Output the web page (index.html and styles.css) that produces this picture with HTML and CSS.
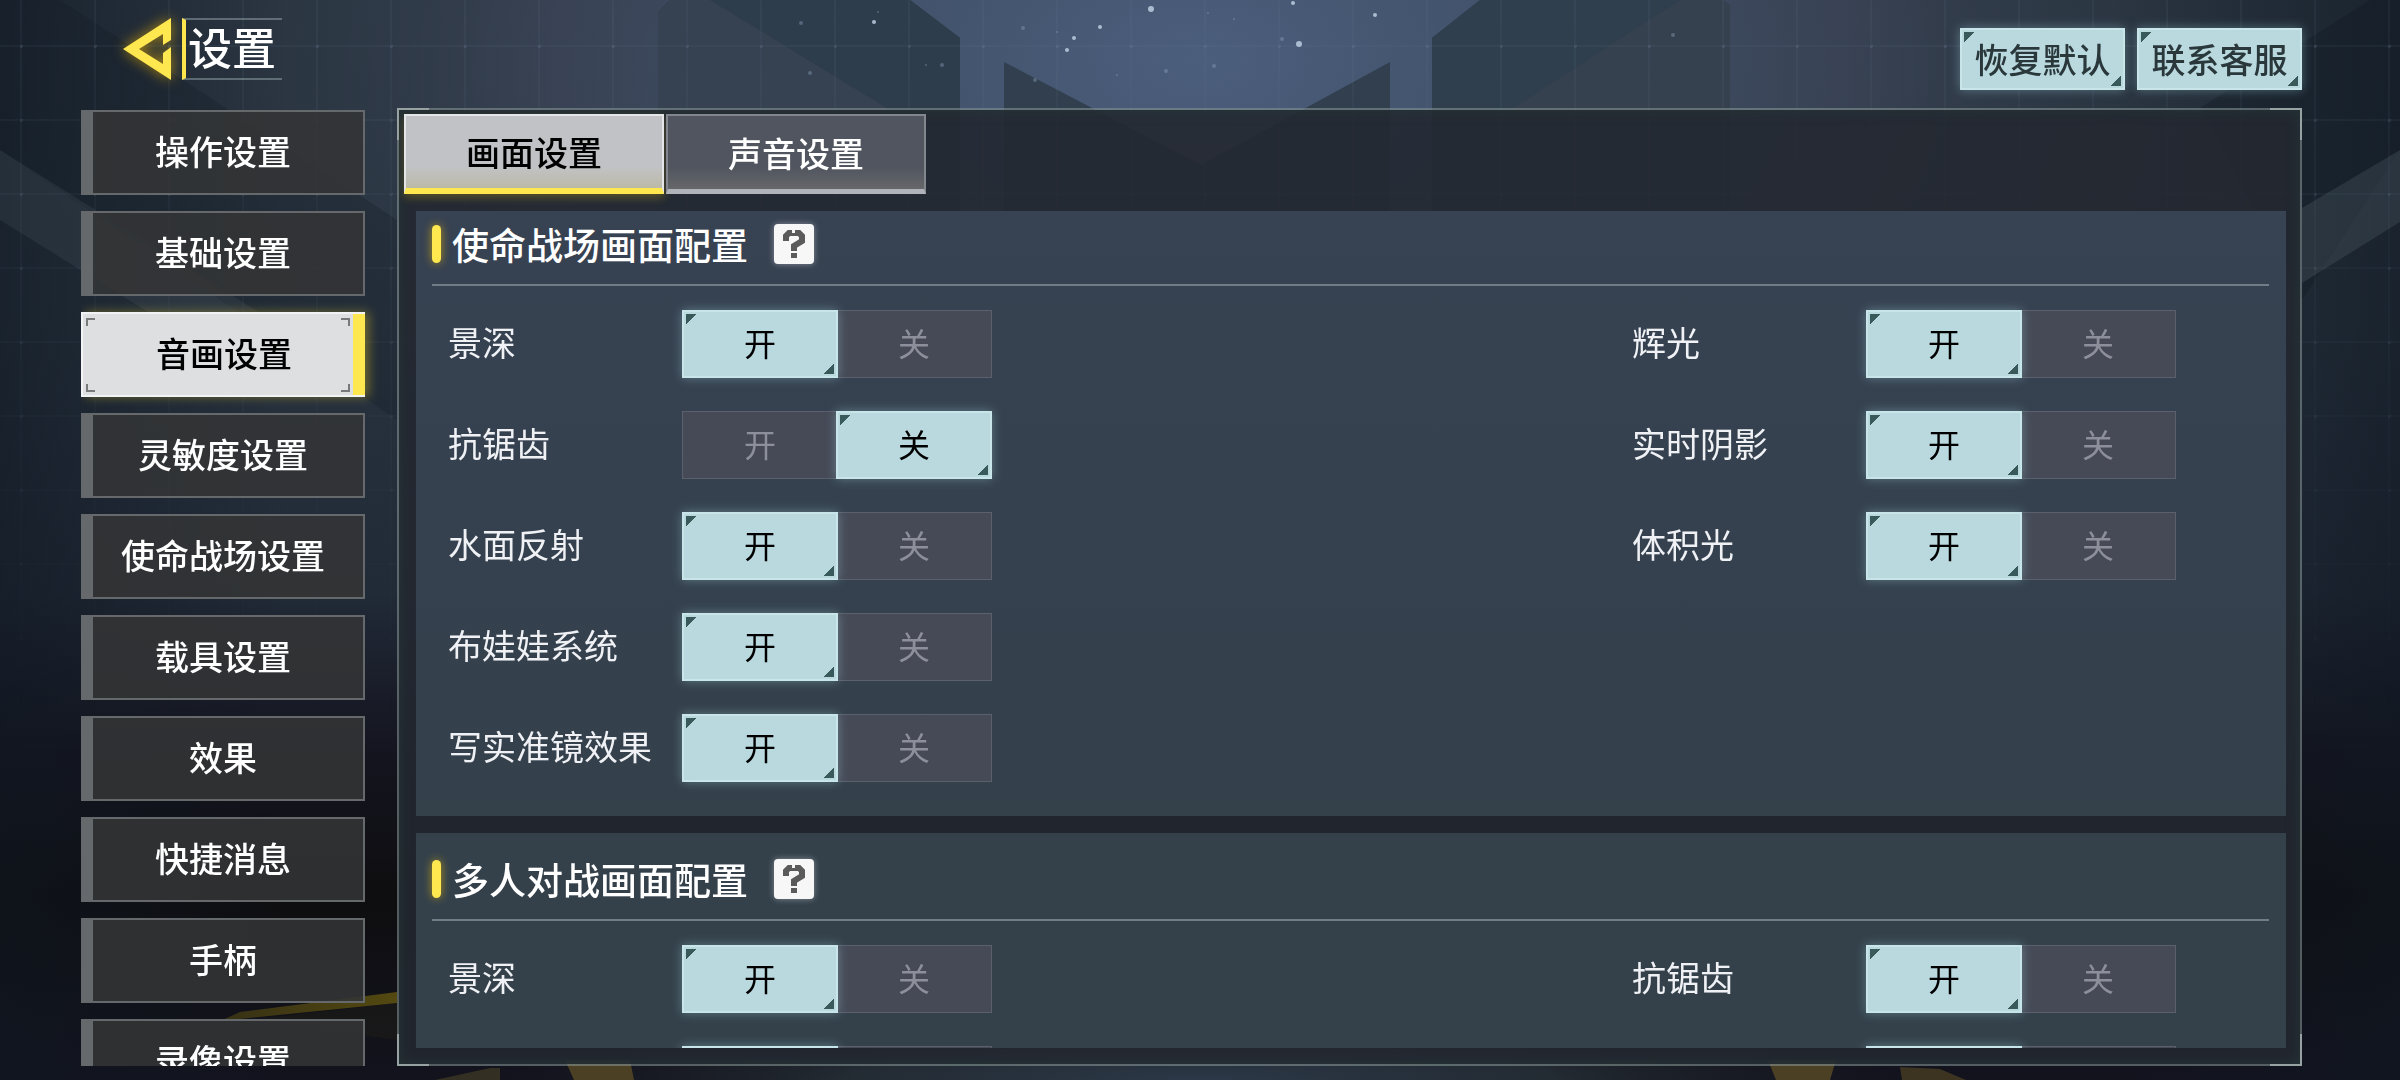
FILE: index.html
```html
<!DOCTYPE html>
<html lang="zh-CN">
<head>
<meta charset="utf-8">
<meta name="viewport" content="width=device-width, initial-scale=1">
<title>设置</title>
<link rel="stylesheet" href="styles.css">
</head>
<body>
<svg class="backdrop" viewBox="0 0 2400 1080" preserveAspectRatio="xMidYMid slice" aria-hidden="true">
  <defs>
    <linearGradient id="sky" x1="0" y1="0" x2="0" y2="1">
      <stop offset="0" stop-color="#2a3541"/>
      <stop offset="0.3" stop-color="#28333f"/>
      <stop offset="0.55" stop-color="#212a37"/>
      <stop offset="0.7" stop-color="#14141f"/>
      <stop offset="0.83" stop-color="#0e0e10"/>
      <stop offset="1" stop-color="#13131e"/>
    </linearGradient>
    <radialGradient id="moon" gradientUnits="userSpaceOnUse" cx="1200" cy="60" r="1000" gradientTransform="translate(0 24) scale(1 0.6)">
      <stop offset="0" stop-color="#4b5e7c"/>
      <stop offset="0.35" stop-color="#44546e" stop-opacity="0.9"/>
      <stop offset="0.65" stop-color="#3e485c" stop-opacity="0.7"/>
      <stop offset="1" stop-color="#303a48" stop-opacity="0"/>
    </radialGradient>
    <linearGradient id="edge" x1="0" y1="0" x2="1" y2="0">
      <stop offset="0" stop-color="#0f1721" stop-opacity="0.6"/>
      <stop offset="0.12" stop-color="#0f1721" stop-opacity="0"/>
      <stop offset="0.88" stop-color="#0f1721" stop-opacity="0"/>
      <stop offset="1" stop-color="#0f1721" stop-opacity="0.6"/>
    </linearGradient>
    <radialGradient id="floor" gradientUnits="userSpaceOnUse" cx="1200" cy="1080" r="700" gradientTransform="translate(0 972) scale(1 0.1)">
      <stop offset="0" stop-color="#2c3848"/>
      <stop offset="0.5" stop-color="#232b33"/>
      <stop offset="1" stop-color="#1a1e22" stop-opacity="0"/>
    </radialGradient>
    <linearGradient id="fade" x1="0" y1="0" x2="0" y2="1">
      <stop offset="0" stop-color="#fff"/>
      <stop offset="1" stop-color="#fff" stop-opacity="0"/>
    </linearGradient>
    <linearGradient id="stripe" x1="0" y1="0" x2="1" y2="0">
      <stop offset="0" stop-color="#5b4f10" stop-opacity="0.5"/>
      <stop offset="1" stop-color="#5b4f10" stop-opacity="0.9"/>
    </linearGradient>
    <mask id="upper"><rect width="2400" height="720" fill="url(#fade)"/></mask>
    <pattern id="grid" width="74" height="74" x="20" y="45" patternUnits="userSpaceOnUse">
      <path d="M0 1H74M1 0V74" stroke="#6a8198" stroke-opacity="0.1" stroke-width="2"/>
      <circle cx="1" cy="1" r="2" fill="#8298b4" fill-opacity="0.2"/>
    </pattern>
  </defs>
  <rect width="2400" height="1080" fill="url(#sky)"/>
  <rect width="2400" height="660" fill="url(#moon)"/>
  <path d="M0 0H60L290 150L397 220V420L0 150Z" fill="#1a232d" fill-opacity="0.4"/>
  <path d="M2400 0H2370L2200 108L2302 300L2400 150Z" fill="#18212b" fill-opacity="0.5"/>
  <rect width="2400" height="1080" fill="url(#edge)"/>
  <path d="M0 150L300 338H190L0 220Z" fill="#4b5860" fill-opacity="0.24"/>
  <path d="M2400 150L2302 208V283L2400 222Z" fill="#4b5860" fill-opacity="0.35"/>
  <path d="M658 12L670 0H910L960 38V400H658Z" fill="#313d4b"/>
  <path d="M710 0H910L960 38V110H890Z" fill="#2e3d4b"/>
  <path d="M658 12L670 0H710L890 110H658Z" fill="#364151"/>
  <path d="M1730 5L1722 0H1480L1432 38V400H1730Z" fill="#313d4b"/>
  <path d="M1680 0H1480L1432 38V110H1510Z" fill="#2f3f4e"/>
  <path d="M1730 5L1722 0H1680L1510 110H1730Z" fill="#36414f"/>
  <path d="M1004 62L1201 165L1390 62V400H1004Z" fill="#313f4e"/>
  <g mask="url(#upper)"><rect width="2400" height="720" fill="url(#grid)"/></g>
  <g fill="#b4c8da" fill-opacity="0.9">
    <circle cx="1151" cy="9" r="3"/><circle cx="1375" cy="15" r="2"/><circle cx="1074" cy="38" r="2"/>
    <circle cx="1299" cy="44" r="3"/><circle cx="1067" cy="50" r="2"/><circle cx="874" cy="22" r="2"/>
    <circle cx="1100" cy="27" r="2"/><circle cx="1293" cy="3" r="2"/>
  </g>
  <g fill="#8fa6bd" fill-opacity="0.4">
    <circle cx="942" cy="65" r="2"/><circle cx="926" cy="65" r="1"/><circle cx="810" cy="73" r="2"/>
    <circle cx="1673" cy="35" r="2"/><circle cx="1166" cy="71" r="2"/><circle cx="1214" cy="66" r="2"/>
    <circle cx="1035" cy="80" r="2"/><circle cx="1208" cy="13" r="1"/><circle cx="801" cy="23" r="2"/>
    <circle cx="1023" cy="28" r="2"/><circle cx="1282" cy="39" r="2"/><circle cx="1057" cy="32" r="1"/>
    <circle cx="878" cy="12" r="1"/><circle cx="1117" cy="75" r="1"/><circle cx="1234" cy="19" r="1"/>
  </g>
  <rect y="900" width="2400" height="180" fill="url(#floor)"/>
  <path d="M220 1021L240 1012L397 992V1003Z" fill="url(#stripe)"/>
  <path d="M240 1021L397 1003V1040L300 1026Z" fill="#2a2818" fill-opacity="0.3"/>
  <path d="M435 1080L490 1068H500V1080Z" fill="#332f22"/>
  <path d="M565 1060H630L634 1080H574Z" fill="#4c4024"/>
  <path d="M1768 1060H1836L1830 1080H1776Z" fill="#4c4024"/>
  <path d="M1900 1067L1940 1069L1966 1080H1902Z" fill="#3c3421"/>
</svg>

<div class="screen">
  <header class="topbar">
    <div class="title-group">
      <a class="back" href="#" aria-label="返回">
        <svg class="back-icon" viewBox="0 0 48 62" aria-hidden="true"><path d="M0 31L48 0V22L40 27V16L16 31L40 46V35L48 29V62Z" fill="#ffe74f"/></svg>
      </a>
      <h1 class="title">设置</h1>
    </div>
    <div class="actions">
      <button class="action lit" type="button">恢复默认</button>
      <button class="action lit" type="button">联系客服</button>
    </div>
  </header>

  <div class="content">
    <nav class="sidebar">
      <a class="side-item" href="#">操作设置</a>
      <a class="side-item" href="#">基础设置</a>
      <a class="side-item side-item--active" href="#" aria-current="page">音画设置<svg class="brackets" viewBox="0 0 264 74" aria-hidden="true"><path d="M1 8V1H9M255 1H263V8M263 66V73H255M9 73H1V66" fill="none" stroke="#77797b" stroke-width="2"/></svg></a>
      <a class="side-item" href="#">灵敏度设置</a>
      <a class="side-item" href="#">使命战场设置</a>
      <a class="side-item" href="#">载具设置</a>
      <a class="side-item" href="#">效果</a>
      <a class="side-item" href="#">快捷消息</a>
      <a class="side-item" href="#">手柄</a>
      <a class="side-item" href="#">录像设置</a>
    </nav>

    <main class="panel">
      <div class="tabs" role="tablist">
        <button class="tab tab--active" type="button" role="tab" aria-selected="true">画面设置</button>
        <button class="tab" type="button" role="tab" aria-selected="false">声音设置</button>
      </div>

      <div class="scroller">
        <section class="section section--first">
          <div class="section-head">
            <h2 class="section-title">使命战场画面配置</h2>
            <button class="help" type="button" aria-label="说明"><svg class="help-icon" viewBox="0 0 40 40" aria-hidden="true"><path d="M12 17V12L15 9H25L28 12V17L20 22V27" fill="none" stroke="#5b5b5b" stroke-width="6"/><path d="M17 29H23V34H17Z" fill="#5b5b5b"/><path d="M18 5H21V9H18Z" fill="#f7f7f7"/></svg></button>
          </div>
          <div class="columns">
            <div class="column">
              <div class="row" role="radiogroup" aria-labelledby="a1">
                <span class="name" id="a1">景深</span>
                <div class="toggle">
                  <label class="option"><input type="radio" name="a1" checked><span class="face">开</span></label>
                  <label class="option"><input type="radio" name="a1"><span class="face">关</span></label>
                </div>
              </div>
              <div class="row" role="radiogroup" aria-labelledby="a2">
                <span class="name" id="a2">抗锯齿</span>
                <div class="toggle">
                  <label class="option"><input type="radio" name="a2"><span class="face">开</span></label>
                  <label class="option"><input type="radio" name="a2" checked><span class="face">关</span></label>
                </div>
              </div>
              <div class="row" role="radiogroup" aria-labelledby="a3">
                <span class="name" id="a3">水面反射</span>
                <div class="toggle">
                  <label class="option"><input type="radio" name="a3" checked><span class="face">开</span></label>
                  <label class="option"><input type="radio" name="a3"><span class="face">关</span></label>
                </div>
              </div>
              <div class="row" role="radiogroup" aria-labelledby="a4">
                <span class="name" id="a4">布娃娃系统</span>
                <div class="toggle">
                  <label class="option"><input type="radio" name="a4" checked><span class="face">开</span></label>
                  <label class="option"><input type="radio" name="a4"><span class="face">关</span></label>
                </div>
              </div>
              <div class="row" role="radiogroup" aria-labelledby="a5">
                <span class="name" id="a5">写实准镜效果</span>
                <div class="toggle">
                  <label class="option"><input type="radio" name="a5" checked><span class="face">开</span></label>
                  <label class="option"><input type="radio" name="a5"><span class="face">关</span></label>
                </div>
              </div>
            </div>
            <div class="column">
              <div class="row" role="radiogroup" aria-labelledby="a6">
                <span class="name" id="a6">辉光</span>
                <div class="toggle">
                  <label class="option"><input type="radio" name="a6" checked><span class="face">开</span></label>
                  <label class="option"><input type="radio" name="a6"><span class="face">关</span></label>
                </div>
              </div>
              <div class="row" role="radiogroup" aria-labelledby="a7">
                <span class="name" id="a7">实时阴影</span>
                <div class="toggle">
                  <label class="option"><input type="radio" name="a7" checked><span class="face">开</span></label>
                  <label class="option"><input type="radio" name="a7"><span class="face">关</span></label>
                </div>
              </div>
              <div class="row" role="radiogroup" aria-labelledby="a8">
                <span class="name" id="a8">体积光</span>
                <div class="toggle">
                  <label class="option"><input type="radio" name="a8" checked><span class="face">开</span></label>
                  <label class="option"><input type="radio" name="a8"><span class="face">关</span></label>
                </div>
              </div>
            </div>
          </div>
        </section>

        <section class="section">
          <div class="section-head">
            <h2 class="section-title">多人对战画面配置</h2>
            <button class="help" type="button" aria-label="说明"><svg class="help-icon" viewBox="0 0 40 40" aria-hidden="true"><path d="M12 17V12L15 9H25L28 12V17L20 22V27" fill="none" stroke="#5b5b5b" stroke-width="6"/><path d="M17 29H23V34H17Z" fill="#5b5b5b"/><path d="M18 5H21V9H18Z" fill="#f7f7f7"/></svg></button>
          </div>
          <div class="columns">
            <div class="column">
              <div class="row" role="radiogroup" aria-labelledby="b1">
                <span class="name" id="b1">景深</span>
                <div class="toggle">
                  <label class="option"><input type="radio" name="b1" checked><span class="face">开</span></label>
                  <label class="option"><input type="radio" name="b1"><span class="face">关</span></label>
                </div>
              </div>
              <div class="row" role="radiogroup">
                <span class="name"></span>
                <div class="toggle">
                  <label class="option"><input type="radio" name="b2" aria-label="开" checked><span class="face"></span></label>
                  <label class="option"><input type="radio" name="b2" aria-label="关"><span class="face"></span></label>
                </div>
              </div>
            </div>
            <div class="column">
              <div class="row" role="radiogroup" aria-labelledby="b3">
                <span class="name" id="b3">抗锯齿</span>
                <div class="toggle">
                  <label class="option"><input type="radio" name="b3" checked><span class="face">开</span></label>
                  <label class="option"><input type="radio" name="b3"><span class="face">关</span></label>
                </div>
              </div>
              <div class="row" role="radiogroup">
                <span class="name"></span>
                <div class="toggle">
                  <label class="option"><input type="radio" name="b4" aria-label="开" checked><span class="face"></span></label>
                  <label class="option"><input type="radio" name="b4" aria-label="关"><span class="face"></span></label>
                </div>
              </div>
            </div>
          </div>
        </section>
      </div>
    </main>
  </div>
</div>
</body>
</html>
```
FILE: styles.css
```css
* {
  box-sizing: border-box;
}

body {
  margin: 0;
  background: #14171f;
  color: #fff;
  font-family: "Noto Sans CJK SC", sans-serif;
  font-size: 34px;
  line-height: 48px;
}

button {
  margin: 0;
  padding: 0;
  border: 0;
  color: inherit;
  font: inherit;
  cursor: pointer;
}

a {
  color: inherit;
  text-decoration: none;
}

.backdrop {
  position: fixed;
  inset: 0;
  z-index: -1;
  width: 100%;
  height: 100%;
}

.screen {
  display: flex;
  flex-direction: column;
  height: 100vh;
  padding: 18px 98px 14px 81px;
}

/* Top bar */

.topbar {
  display: flex;
  justify-content: space-between;
  align-items: flex-start;
  padding: 0 0 18px 42px;
}

.title-group {
  display: flex;
  gap: 11px;
}

.back {
  display: block;
  height: 62px;
}

.back-icon {
  display: block;
  width: 48px;
  height: 62px;
  overflow: visible;
  filter: drop-shadow(0 0 7px rgba(240, 180, 0, 0.7));
}

.title {
  margin: 0;
  padding: 0 6px 6px 2px;
  border: solid rgba(150, 165, 170, 0.5);
  border-width: 2px 0;
  border-left: 4px solid #ffe74f;
  font-size: 44px;
  font-weight: 500;
  line-height: 52px;
}

.actions {
  display: flex;
  gap: 12px;
  padding-top: 10px;
}

.action {
  width: 165px;
  height: 62px;
  color: #2a383b;
  font-weight: 500;
}

/* Pale glowing face with a dark triangle in two corners */

.lit,
.option input:checked + .face {
  border: 2px solid #c8e6e9;
  background:
    linear-gradient(135deg, #385a5b 50%, transparent 51%) 2px 2px / 10px 10px no-repeat,
    linear-gradient(315deg, #385a5b 50%, transparent 51%) right 2px bottom 2px / 10px 10px no-repeat,
    #b9d9df;
  box-shadow: 0 0 10px rgba(160, 215, 220, 0.4);
}

/* Side navigation */

.content {
  display: flex;
  flex: 1;
  gap: 32px;
  min-height: 0;
}

.sidebar {
  display: flex;
  flex: none;
  flex-direction: column;
  gap: 16px;
  width: 300px;
  margin-right: -16px;
  padding: 2px 16px 0 0;
  overflow: hidden;
}

.side-item {
  display: flex;
  flex: none;
  justify-content: center;
  align-items: center;
  height: 85px;
  padding-bottom: 4px;
  border: 2px solid #65696c;
  background: linear-gradient(90deg, #66696b 10px, transparent 10px), rgba(51, 52, 53, 0.88);
  font-weight: 500;
}

.side-item--active {
  position: relative;
  border-color: #f2f3f4;
  border-right: 0;
  background: linear-gradient(90deg, transparent calc(100% - 12px), #ffe74f calc(100% - 12px)), #dddfe0;
  box-shadow: 4px 0 10px rgba(255, 220, 40, 0.35);
  color: #000;
}

.brackets {
  position: absolute;
  top: 4px;
  left: 3px;
  width: 264px;
  height: 74px;
}

/* Main panel */

.panel {
  display: flex;
  flex: 1;
  flex-direction: column;
  min-width: 0;
  padding: 4px 14px 16px 5px;
  border: 2px solid rgba(130, 145, 145, 0.6);
  background:
    linear-gradient(#b6bcbe, #b6bcbe) left top / 32px 2px no-repeat border-box,
    linear-gradient(#b6bcbe, #b6bcbe) left top / 2px 32px no-repeat border-box,
    linear-gradient(#b6bcbe, #b6bcbe) right top / 32px 2px no-repeat border-box,
    linear-gradient(#b6bcbe, #b6bcbe) right top / 2px 32px no-repeat border-box,
    linear-gradient(#b6bcbe, #b6bcbe) left bottom / 32px 2px no-repeat border-box,
    linear-gradient(#b6bcbe, #b6bcbe) left bottom / 2px 32px no-repeat border-box,
    linear-gradient(#b6bcbe, #b6bcbe) right bottom / 32px 2px no-repeat border-box,
    linear-gradient(#b6bcbe, #b6bcbe) right bottom / 2px 32px no-repeat border-box,
    rgba(36, 40, 49, 0.9) padding-box;
  box-shadow: inset 0 0 14px rgba(38, 56, 56, 0.8);
}

.tabs {
  display: flex;
  flex: none;
  gap: 2px;
  margin-bottom: 17px;
}

.tab {
  width: 260px;
  height: 80px;
  border: 2px solid #82878d;
  border-bottom: 5px solid #b1b3ba;
  background: linear-gradient(#50555f 70%, #666769);
  font-weight: 500;
}

.tab--active {
  border-color: #e4e5e7;
  border-bottom: 6px solid #ffe74f;
  background: linear-gradient(#c1c2c5 70%, #bcb9a8);
  box-shadow: 0 4px 8px rgba(200, 170, 20, 0.3);
  color: #000;
}

.scroller {
  display: flex;
  flex: 1;
  flex-direction: column;
  gap: 17px;
  min-height: 0;
  margin-left: 12px;
  overflow: hidden;
}

.section {
  flex: none;
  padding: 13px 0 34px;
  background: #34414b;
}

.section--first {
  padding-top: 0;
  background: linear-gradient(#374252, #35414f 50%, #34404a);
}

.section-head {
  display: flex;
  align-items: center;
  height: 75px;
  margin: 0 17px 0 16px;
  padding-bottom: 8px;
  border-bottom: 2px solid #717c87;
}

.section-title {
  display: flex;
  align-items: center;
  gap: 11px;
  margin: 0 26px 0 0;
  font-size: 37px;
  font-weight: 500;
  line-height: 44px;
}

.section-title::before {
  width: 9px;
  height: 38px;
  border-radius: 5px;
  background: #ffe74f;
  box-shadow: 0 0 10px rgba(255, 200, 0, 0.6);
  content: "";
}

.help {
  width: 40px;
  height: 40px;
  border-radius: 4px;
  background: #f7f7f7;
  box-shadow: 0 0 6px rgba(255, 255, 255, 0.4);
}

.help-icon {
  display: block;
  width: 40px;
  height: 40px;
}

.columns {
  display: grid;
  grid-template-columns: 19fr 10fr;
  padding: 24px 31px 0 32px;
}

.column {
  display: flex;
  flex-direction: column;
  gap: 33px;
}

.row {
  display: flex;
  align-items: center;
}

.name {
  width: 234px;
  padding-bottom: 4px;
  color: #eff1f5;
  white-space: nowrap;
}

.toggle {
  display: grid;
  grid-template-columns: 1fr 1fr;
  width: 310px;
  height: 68px;
  border: 1px solid #5a606c;
  background: #464a57;
}

.option {
  position: relative;
  display: flex;
  margin: -1px;
  cursor: pointer;
}

.option input {
  position: absolute;
  inset: 0;
  width: 100%;
  height: 100%;
  margin: 0;
  opacity: 0;
}

.face {
  display: flex;
  flex: 1;
  justify-content: center;
  align-items: center;
  padding-bottom: 4px;
  color: #8d909b;
  font-size: 32px;
}

.option input:checked + .face {
  color: #000;
}
```
